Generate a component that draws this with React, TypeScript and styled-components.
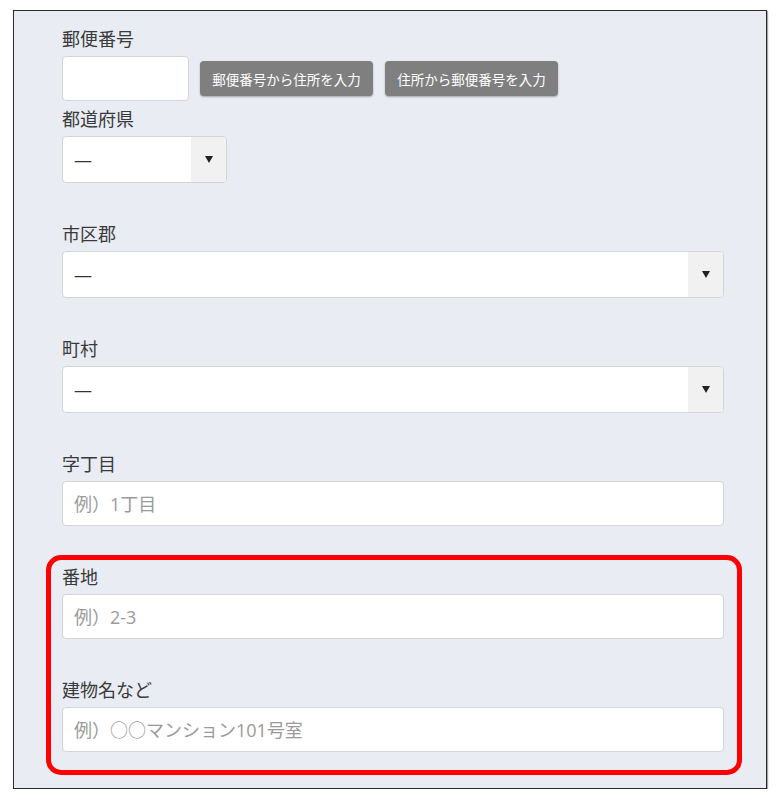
import React from "react";
import styled, { createGlobalStyle } from "styled-components";

const GlobalStyle = createGlobalStyle`
  html, body { margin: 0; padding: 0; background: #ffffff; }
  body {
    font-family: "Noto Sans CJK JP", "Noto Sans", sans-serif;
    color: #333333;
  }
  * { box-sizing: border-box; }
`;

const fieldFont = `"Open Sans", "Noto Sans CJK JP", sans-serif`;

const Page = styled.div`
  padding: 10px 0 0 13px;
`;

const Frame = styled.div`
  width: 754px;
  height: 779px;
  border: 1px solid #2a2a2a;
  box-shadow: 1px 1px 1px rgba(0, 0, 0, 0.35);
  background: #e9ecf3;
  padding: 14px 42px 13px 48px;
`;

const Field = styled.div<{ $last?: boolean }>`
  margin-bottom: ${(p) => (p.$last ? "0" : "37px")};
`;

const TopField = styled.div`
  margin-bottom: 4px;
`;

const Label = styled.label`
  display: block;
  font-size: 18px;
  line-height: 26px;
  color: #3a3a3a;
  margin-bottom: 5px;
`;

const Row = styled.div`
  display: flex;
  align-items: center;
`;

const TextInput = styled.input<{ $width?: number }>`
  display: block;
  width: ${(p) => (p.$width ? `${p.$width}px` : "100%")};
  height: 45px;
  border: 1px solid #d4d4d4;
  border-radius: 4px;
  background: #ffffff;
  padding: 0 11px;
  font-family: ${fieldFont};
  font-size: 18px;
  color: #333333;
  outline: none;
  &::placeholder { color: #9a9a9a; }
`;

const ActionButton = styled.button`
  height: 35px;
  width: 173px;
  margin-left: 11px;
  padding: 0;
  border: none;
  border-radius: 4px;
  background: #7f7f7f;
  color: #ffffff;
  font-family: "Noto Sans CJK JP", "Noto Sans", sans-serif;
  font-size: 13.5px;
  box-shadow: 0 1px 2px rgba(0, 0, 0, 0.3);
  & + & { margin-left: 12px; }
`;

const SelectBox = styled.div<{ $width?: number }>`
  display: flex;
  width: ${(p) => (p.$width ? `${p.$width}px` : "100%")};
  height: 47px;
  border: 1px solid #d4d4d4;
  border-radius: 4px;
  background: #ffffff;
  overflow: hidden;
`;

const NativeSelect = styled.select`
  flex: 1;
  min-width: 0;
  appearance: none;
  -webkit-appearance: none;
  border: none;
  background: transparent;
  padding: 0 11px;
  font-family: ${fieldFont};
  font-size: 18px;
  color: #333333;
  outline: none;
`;

const ArrowZone = styled.span`
  width: 35px;
  flex: none;
  background: #f1f1f1;
  display: flex;
  align-items: center;
  justify-content: center;
  &::after {
    content: "";
    width: 0;
    height: 0;
    border-left: 4px solid transparent;
    border-right: 4px solid transparent;
    border-top: 7px solid #222222;
  }
`;

const Highlight = styled.div`
  margin: -8px -18px 0 -16px;
  padding: 3px 13px 18px 11px;
  border: 5px solid #ff0000;
  border-radius: 15px;
`;

const Select = ({ width }: { width?: number }) => (
  <SelectBox $width={width}>
    <NativeSelect defaultValue="">
      <option value="">—</option>
    </NativeSelect>
    <ArrowZone />
  </SelectBox>
);

export default function App() {
  return (
    <>
      <GlobalStyle />
      <Page>
        <Frame>
          <Label>郵便番号</Label>
          <TopField>
            <Row>
              <TextInput $width={127} />
              <ActionButton>郵便番号から住所を入力</ActionButton>
              <ActionButton>住所から郵便番号を入力</ActionButton>
            </Row>
          </TopField>
          <Field>
            <Label>都道府県</Label>
            <Select width={165} />
          </Field>
          <Field>
            <Label>市区郡</Label>
            <Select />
          </Field>
          <Field>
            <Label>町村</Label>
            <Select />
          </Field>
          <Field>
            <Label>字丁目</Label>
            <TextInput placeholder="例）1丁目" />
          </Field>
          <Highlight>
            <Field>
              <Label>番地</Label>
              <TextInput placeholder="例）2-3" />
            </Field>
            <Field $last>
              <Label>建物名など</Label>
              <TextInput placeholder="例）○○マンション101号室" />
            </Field>
          </Highlight>
        </Frame>
      </Page>
    </>
  );
}
